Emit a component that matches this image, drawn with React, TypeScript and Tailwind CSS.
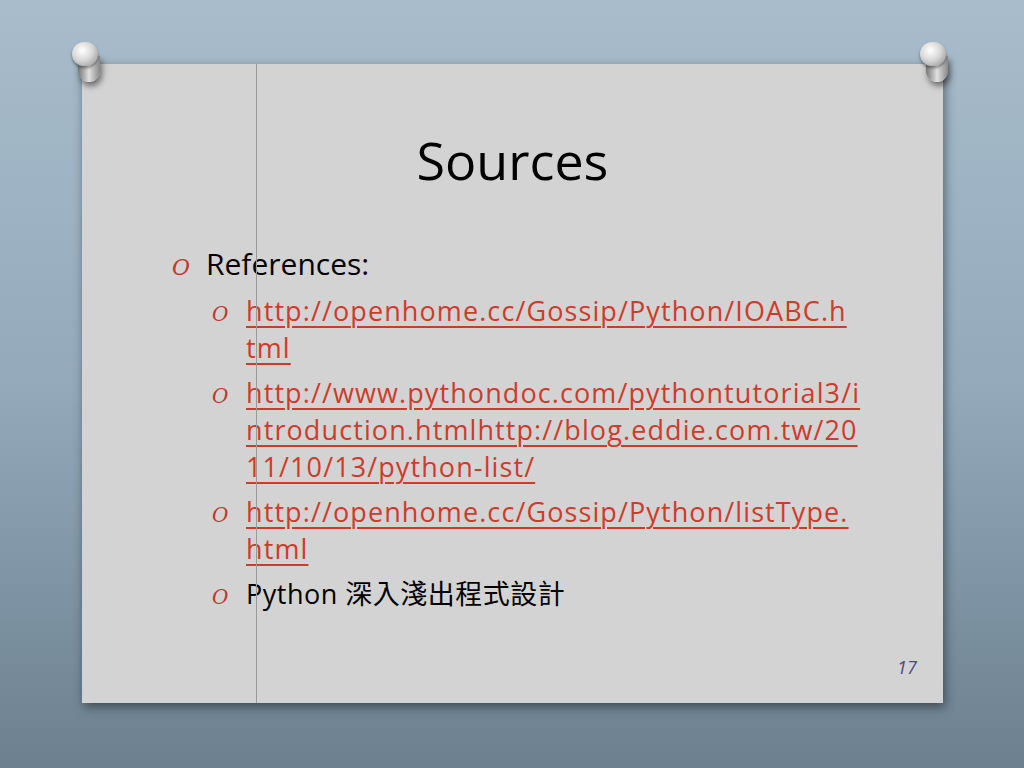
export default function App() {
  const link = "text-[#cf3b2b] underline decoration-[2px] underline-offset-[5px]";
  const Bullet = ({ size }: { size: string }) => (
    <span className={`text-[#c0392b] italic ${size} w-[26px] shrink-0`} style={{ fontFamily: "'DejaVu Serif', serif" }}>O</span>
  );
  const Pin = () => (
    <div className="relative w-[34px] h-[44px]">
      <div className="absolute left-[8px] top-[14px] w-[22px] h-[26px] rounded-b-[11px] bg-gradient-to-r from-[#777] via-[#e0e0e0] to-[#888] shadow-[2px_4px_6px_rgba(0,0,0,0.5)]" />
      <div className="absolute left-[2px] top-0 w-[26px] h-[24px] rounded-full bg-[radial-gradient(circle_at_40%_35%,#ffffff,#d8d8d8_45%,#8a8a8a)] shadow-[0_2px_3px_rgba(0,0,0,0.4)]" />
    </div>
  );
  return (
    <div className="w-[1024px] h-[768px] relative overflow-hidden bg-gradient-to-b from-[#a8bccb] via-[#94aabb] to-[#6c808f]" style={{ fontFamily: "'Open Sans','Liberation Sans','Noto Sans CJK TC',sans-serif" }}>
      <div className="absolute left-[82px] top-[64px] w-[861px] h-[639px] bg-[#d3d3d3] shadow-[2px_4px_10px_rgba(0,0,0,0.45)]">
        <div className="absolute left-[174px] top-0 bottom-0 w-px bg-[#9a9a9a]" />
        <div className="text-center text-[52px] text-black mt-[70px] leading-none">Sources</div>
        <div className="ml-[90px] mt-[58px]">
          <div className="flex items-baseline text-[30px] text-black leading-[40px]">
            <Bullet size="text-[22px]" />
            <span className="ml-[8px]">References:</span>
          </div>
          <div className="ml-[40px] mt-[4px] flex flex-col gap-[8px] text-[27px] leading-[37px]">
            {[
              ["http://openhome.cc/Gossip/Python/IOABC.h", "tml"],
              ["http://www.pythondoc.com/pythontutorial3/i", "ntroduction.htmlhttp://blog.eddie.com.tw/20", "11/10/13/python-list/"],
              ["http://openhome.cc/Gossip/Python/listType.", "html"],
            ].map((lines, i) => (
              <div key={i} className="flex items-baseline">
                <Bullet size="text-[20px]" />
                <div className="ml-[8px] tracking-[1.1px]">
                  {lines.map((l, j) => (
                    <div key={j} className="whitespace-nowrap"><span className={link}>{l}</span></div>
                  ))}
                </div>
              </div>
            ))}
            <div className="flex items-baseline">
              <Bullet size="text-[20px]" />
              <span className="ml-[8px] text-black tracking-[0.5px]">Python 深入淺出程式設計</span>
            </div>
          </div>
        </div>
        <div className="absolute left-[815px] top-[590px] text-[#4a4a8a] italic text-[18px]">17</div>
      </div>
      <div className="absolute left-[70px] top-[42px]"><Pin /></div>
      <div className="absolute left-[918px] top-[42px]"><Pin /></div>
    </div>
  );
}
